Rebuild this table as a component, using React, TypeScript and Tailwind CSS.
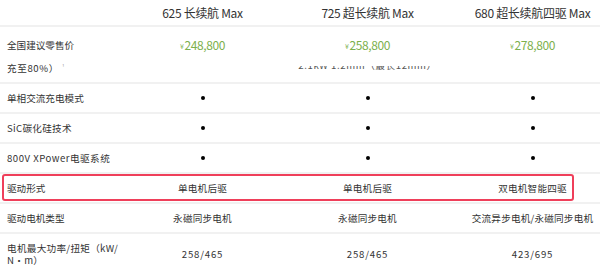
import React from "react";

const font = { fontFamily: '"Noto Sans CJK SC", "Noto Sans", sans-serif' };

function Divider() {
  return <div className="h-[2px] w-full bg-[#f1f1f1]" />;
}

function Dot() {
  return <span className="block h-[4px] w-[4px] rounded-full bg-black" />;
}

function Row({
  label,
  values,
  h,
}: {
  label: React.ReactNode;
  values: React.ReactNode[];
  h: string;
}) {
  return (
    <div className={`grid grid-cols-[120px_165px_165px_165px] items-center ${h}`}>
      <div className="pl-[7px] text-[9.6px] leading-[12px] text-[#333]">{label}</div>
      {values.map((v, i) => (
        <div key={i} className="flex justify-center text-[9.6px] text-[#333] tracking-[0.2px]">
          {v}
        </div>
      ))}
    </div>
  );
}

export default function App() {
  return (
    <div className="w-[600px] h-[272px] overflow-hidden bg-white" style={font}>
      <div className="w-[615px]">
        {/* header */}
        <div className="grid grid-cols-[120px_165px_165px_165px] h-[25px] items-center text-[12px] text-[#333] tracking-[-0.3px]">
          <div />
          <div className="text-center">625 长续航 Max</div>
          <div className="text-center">725 超长续航 Max</div>
          <div className="text-center">680 超长续航四驱 Max</div>
        </div>
        <Divider />
        {/* price row */}
        <div className="grid grid-cols-[120px_165px_165px_165px] h-[55px]">
          <div className="flex flex-col pl-[7px] text-[9.6px] text-[#333]">
            <div className="h-[35px] flex items-center pt-[1px]">全国建议零售价</div>
            <div className="h-[13px] flex items-center tracking-[0.6px]">
              充至80%）<span className="ml-[3px] text-[6px] text-[#999] -mt-[4px]">¹</span>
            </div>
          </div>
          {["248,800", "258,800", "278,800"].map((p, i) => (
            <div key={p} className="flex flex-col items-center">
              <div className="h-[35px] flex items-center pt-[1px] text-[12px] text-[#7cb04c] tracking-[-0.4px]">
                <span className="text-[7px] mr-[1px] mt-[2px]">¥</span>
                {p}
              </div>
              {i === 1 ? (
                <div className="mt-[4px] h-[5px] overflow-hidden">
                  <div className="-mt-[6px] text-[9.6px] leading-[11px] text-[#555] tracking-[0.6px]">
                    2.1kW  1.2mm（最长12mm）
                  </div>
                </div>
              ) : null}
            </div>
          ))}
        </div>
        <Divider />
        <Row h="h-[28px]" label="单相交流充电模式" values={[<Dot />, <Dot />, <Dot />]} />
        <Divider />
        <Row h="h-[28px]" label={<span className="tracking-[0.3px]">SiC碳化硅技术</span>} values={[<Dot />, <Dot />, <Dot />]} />
        <Divider />
        <Row
          h="h-[28px]"
          label={<span className="tracking-[0.5px]">800V XPower电驱系统</span>}
          values={[<Dot />, <Dot />, <Dot />]}
        />
        <Divider />
        <div className="relative">
          <Row h="h-[28px]" label="驱动形式" values={["单电机后驱", "单电机后驱", "双电机智能四驱"]} />
          <div className="pointer-events-none absolute left-[2px] top-0 h-[27px] w-[572px] rounded-[3px] border-2 border-[#ef3f5a]" />
        </div>
        <Divider />
        <Row h="h-[28px]" label="驱动电机类型" values={["永磁同步电机", "永磁同步电机", "交流异步电机/永磁同步电机"]} />
        <Divider />
        <Row
          h="h-[40px]"
          label={
            <span className="block whitespace-nowrap tracking-[0.3px]">
              电机最大功率/扭矩（kW/
              <br />
              N·m）
            </span>
          }
          values={[
            <span className="tracking-[0.8px]">258/465</span>,
            <span className="tracking-[0.8px]">258/465</span>,
            <span className="tracking-[0.8px]">423/695</span>,
          ]}
        />
      </div>
    </div>
  );
}
